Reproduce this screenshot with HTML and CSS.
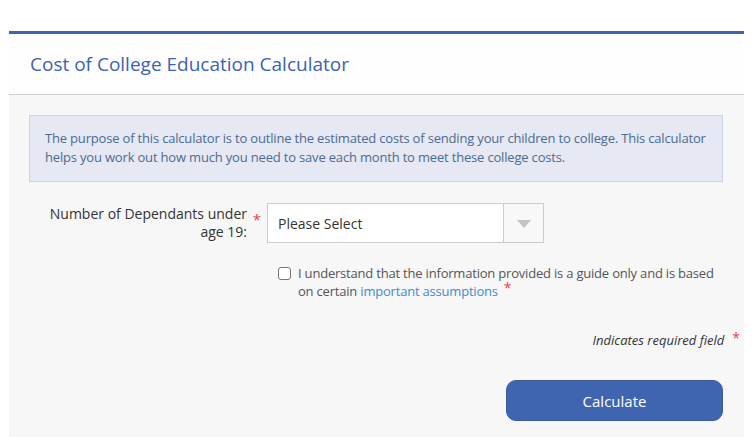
FILE: index.html
```html
<!DOCTYPE html>
<html lang="en">
<head>
<meta charset="utf-8">
<title>Cost of College Education Calculator</title>
<link rel="stylesheet" href="styles.css">
</head>
<body>
<div class="panel">
  <div class="panel-header">
    <h1 class="title">Cost of College Education Calculator</h1>
  </div>
  <div class="panel-body">
    <div class="info">The purpose of this calculator is to outline the estimated costs of sending your children to college. This calculator helps you work out how much you need to save each month to meet these college costs.</div>

    <div class="field-row">
      <label class="field-label">Number of Dependants under age 19:</label>
      <span class="req">*</span>
      <div class="select">
        <span class="select-text">Please Select</span>
        <span class="select-arrow"><span class="triangle"></span></span>
      </div>
    </div>

    <div class="check-row">
      <span class="checkbox"></span>
      <span class="check-text">I understand that the information provided is a guide only and is based on certain <a class="link" href="#">important assumptions</a><span class="req-inline">*</span></span>
    </div>

    <div class="required-row">
      <span class="required-text">Indicates required field</span>
      <span class="req-small">*</span>
    </div>

    <div class="actions">
      <button class="btn">Calculate</button>
    </div>
  </div>
</div>
</body>
</html>
```

FILE: styles.css
```css
html, body {
  margin: 0;
  padding: 0;
  background: #ffffff;
  font-family: "Open Sans", "Noto Sans", sans-serif;
}

body {
  padding: 31px 9px 0 9px;
  height: 437px;
  box-sizing: border-box;
  overflow: hidden;
}

.panel {
  width: 735px;
  border-top: 3px solid #4063ad;
  display: flex;
  flex-direction: column;
  height: 406px;
}

.panel-header {
  height: 60px;
  border-bottom: 1px solid #d0d0d0;
  background: #fefefe;
}

.title {
  margin: 0;
  padding-left: 21px;
  font-size: 19px;
  font-weight: 400;
  line-height: 60px;
  color: #3d62b0;
}

.panel-body {
  flex: 1;
  background: #f7f7f7;
  padding: 20px 21px 0 20px;
}

.info {
  background: #e6e8f3;
  border: 1px solid #c9d4e6;
  padding: 13px 12px 14px 15px;
  font-size: 13px;
  line-height: 19px;
  letter-spacing: -0.18px;
  color: #4a6c92;
}

.field-row {
  margin-top: 21px;
  display: flex;
  align-items: flex-start;
}

.field-label {
  width: 218px;
  text-align: right;
  font-size: 14px;
  line-height: 18px;
  color: #333333;
  padding-top: 2px;
}

.req {
  width: 20px;
  text-align: center;
  color: #e8424f;
  font-size: 15px;
  line-height: 18px;
  padding-top: 7px;
}

.select {
  width: 277px;
  height: 40px;
  box-sizing: border-box;
  border: 1px solid #cccccc;
  background: #ffffff;
  display: flex;
  align-items: stretch;
}

.select-text {
  flex: 1;
  padding-left: 10px;
  padding-top: 3px;
  font-size: 14px;
  line-height: 34px;
  color: #333333;
}

.select-arrow {
  width: 39px;
  border-left: 1px solid #cccccc;
  background: #f8f8f8;
  display: flex;
  align-items: center;
  justify-content: center;
}

.triangle {
  width: 0;
  height: 0;
  border-left: 7.5px solid transparent;
  border-right: 7.5px solid transparent;
  border-top: 8px solid #c4c4c4;
  margin-top: 1px;
}

.check-row {
  margin-top: 21px;
  margin-left: 249px;
  display: flex;
  align-items: flex-start;
}

.checkbox {
  width: 13px;
  height: 13px;
  box-sizing: border-box;
  border: 1px solid #777777;
  border-radius: 3px;
  background: #ffffff;
  margin-top: 3px;
  flex: none;
}

.check-text {
  margin-left: 7px;
  font-size: 13px;
  line-height: 18px;
  letter-spacing: -0.2px;
  color: #555555;
}

.link {
  color: #3b8dcc;
  text-decoration: none;
}

.req-inline {
  color: #e8424f;
  margin-left: 6px;
  font-size: 14px;
  line-height: 0;
  vertical-align: 3px;
}

.required-row {
  margin-top: 31px;
  margin-right: -17px;
  display: flex;
  justify-content: flex-end;
  align-items: flex-start;
}

.required-text {
  font-size: 13px;
  font-style: italic;
  line-height: 18px;
  color: #333333;
}

.req-small {
  margin-left: 8px;
  color: #e8424f;
  font-size: 14px;
  line-height: 14px;
}

.actions {
  margin-top: 31px;
  display: flex;
  justify-content: flex-end;
}

.btn {
  width: 217px;
  height: 41px;
  border: 1px solid #3a5c9f;
  border-radius: 10px;
  background: #4065b0;
  color: #ffffff;
  font-family: "Open Sans", "Noto Sans", sans-serif;
  font-size: 15px;
  cursor: pointer;
}
```
